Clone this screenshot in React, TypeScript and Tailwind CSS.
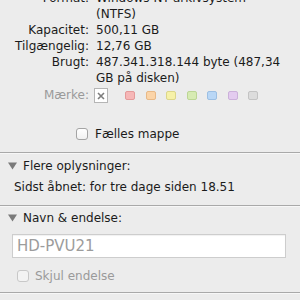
import React from "react";

const Tri = () => (
  <svg width="9" height="8" viewBox="0 0 9 8" className="shrink-0">
    <path d="M0 0.5 L9 0.5 L4.5 7.5 Z" fill="#7a7a7a" />
  </svg>
);

const Sep = () => (
  <div className="h-px w-full bg-[#a9a9a9] shadow-[0_1px_0_#f7f7f7]" />
);

const colors = [
  ["#f6b7b7", "#e49a9a"],
  ["#fbd4a8", "#e8b987"],
  ["#f6f1a8", "#dcd68a"],
  ["#d7ebb3", "#bcd695"],
  ["#b9d7f6", "#9cbfe3"],
  ["#e3cbef", "#cbb0da"],
  ["#dcdcdc", "#c3c3c3"],
];

export default function App() {
  return (
    <div
      className="w-[300px] h-[300px] overflow-hidden bg-[#ececec] text-[12px] text-[#1b1b1b]"
      style={{ fontFamily: '"DejaVu Sans", "Liberation Sans", sans-serif' }}
    >
      <div className="mt-[-10px] grid grid-cols-[89px_1fr] gap-x-[7px] pr-[12px] leading-[16px]">
        <div className="text-right">Format:</div>
        <div>Windows NT-arkivsystem (NTFS)</div>
        <div className="text-right">Kapacitet:</div>
        <div>500,11 GB</div>
        <div className="text-right">Tilgængelig:</div>
        <div>12,76 GB</div>
        <div className="text-right">Brugt:</div>
        <div>487.341.318.144 byte (487,34 GB på disken)</div>
        <div className="text-right text-[#9a9a9a] leading-[16px] pt-[1px] h-[17px]">Mærke:</div>
        <div className="flex items-center h-[17px] mt-[1px] -ml-[2px]">
          <div className="w-[14px] h-[15px] border border-[#b5b5b5] bg-white flex items-center justify-center">
            <svg width="8" height="8" viewBox="0 0 8 8">
              <path d="M1 1 L7 7 M7 1 L1 7" stroke="#7d7d7d" strokeWidth="1.6" />
            </svg>
          </div>
          <div className="flex ml-[17px] gap-[10.5px]">
            {colors.map(([bg, bd], i) => (
              <div
                key={i}
                className="w-[10px] h-[9px] rounded-[2px] border"
                style={{ background: bg, borderColor: bd }}
              />
            ))}
          </div>
        </div>
      </div>

      <div className="flex items-center h-[16px] mt-[22px] ml-[76px]">
        <div className="w-[12px] h-[12px] rounded-[3px] border border-[#a4a4a4] bg-gradient-to-b from-white to-[#f1f1f1]" />
        <span className="ml-[7px]">Fælles mappe</span>
      </div>

      <div className="mt-[10px]">
        <Sep />
      </div>

      <div className="flex items-center h-[23px] pl-[8px] gap-[6px] mt-[1px]">
        <Tri />
        <span>Flere oplysninger:</span>
      </div>
      <div className="h-[19px] pl-[14px] flex items-center">
        Sidst åbnet: for tre dage siden 18.51
      </div>
      <div className="mt-[9px]">
        <Sep />
      </div>

      <div className="flex items-center h-[23px] pl-[8px] gap-[6px]">
        <Tri />
        <span>Navn &amp; endelse:</span>
      </div>
      <div className="ml-[12px] mr-[14px] mt-[5px] h-[24px] border border-[#cdcdcd] bg-white shadow-[inset_0_1px_1px_rgba(0,0,0,0.06)] flex items-center pl-[4px] text-[15px] text-[#9c9c9c]">
        HD-PVU21
      </div>
      <div className="flex items-center h-[20px] ml-[17px] mt-[8px]">
        <div className="w-[12px] h-[12px] rounded-[3px] border border-[#c8c8c8] bg-[#f3f3f3]" />
        <span className="ml-[6px] text-[#9a9a9a]">Skjul endelse</span>
      </div>
      <div className="mt-[6px]">
        <Sep />
      </div>
      <div className="flex items-center h-[23px] pl-[8px] gap-[6px] mt-[1px]">
        <Tri />
        <span>Sammendrag:</span>
      </div>
    </div>
  );
}
